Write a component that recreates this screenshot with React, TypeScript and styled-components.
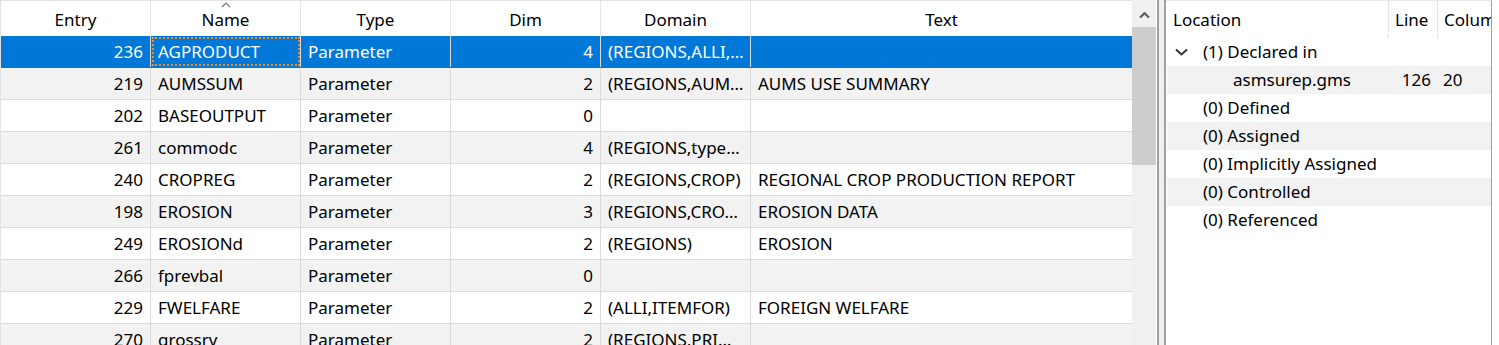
import styled, { createGlobalStyle } from "styled-components";

const GlobalStyle = createGlobalStyle`
  * { box-sizing: border-box; }
  html, body { margin: 0; padding: 0; background: #fff; }
  body {
    font-family: "Noto Sans", "Open Sans", sans-serif;
    font-size: 17px;
    color: #000;
  }
`;

type SymbolRow = {
  entry: number;
  name: string;
  type: string;
  dim: number;
  domain: string;
  text: string;
};

const rows: SymbolRow[] = [
  { entry: 236, name: "AGPRODUCT", type: "Parameter", dim: 4, domain: "(REGIONS,ALLI,…", text: "" },
  { entry: 219, name: "AUMSSUM", type: "Parameter", dim: 2, domain: "(REGIONS,AUM…", text: "AUMS USE SUMMARY" },
  { entry: 202, name: "BASEOUTPUT", type: "Parameter", dim: 0, domain: "", text: "" },
  { entry: 261, name: "commodc", type: "Parameter", dim: 4, domain: "(REGIONS,type…", text: "" },
  { entry: 240, name: "CROPREG", type: "Parameter", dim: 2, domain: "(REGIONS,CROP)", text: "REGIONAL CROP PRODUCTION REPORT" },
  { entry: 198, name: "EROSION", type: "Parameter", dim: 3, domain: "(REGIONS,CRO…", text: "EROSION DATA" },
  { entry: 249, name: "EROSIONd", type: "Parameter", dim: 2, domain: "(REGIONS)", text: "EROSION" },
  { entry: 266, name: "fprevbal", type: "Parameter", dim: 0, domain: "", text: "" },
  { entry: 229, name: "FWELFARE", type: "Parameter", dim: 2, domain: "(ALLI,ITEMFOR)", text: "FOREIGN WELFARE" },
  { entry: 270, name: "grossrv", type: "Parameter", dim: 2, domain: "(REGIONS,PRI…", text: "" },
];

const references = [
  { label: "(0) Defined" },
  { label: "(0) Assigned" },
  { label: "(0) Implicitly Assigned" },
  { label: "(0) Controlled" },
  { label: "(0) Referenced" },
];

const COLUMNS = "150px 150px 150px 150px 150px 1fr";

const ChevronUp = ({ size = 10, color = "#606060", width = 2 }: { size?: number; color?: string; width?: number }) => (
  <svg width={size} height={size * 0.6} viewBox="0 0 10 6">
    <polyline points="1,5 5,1 9,5" fill="none" stroke={color} strokeWidth={width} />
  </svg>
);

const ChevronDown = () => (
  <svg width="13" height="8" viewBox="0 0 13 8">
    <polyline points="1,1.5 6.5,6.5 12,1.5" fill="none" stroke="#333" strokeWidth="2" />
  </svg>
);

const App = () => {
  return (
    <>
      <GlobalStyle />
      <Window>
        <TablePane>
          <HeaderRow>
            <HeaderCell>Entry</HeaderCell>
            <HeaderCell>
              <SortMark>
                <ChevronUp size={10} color="#777" width={1.2} />
              </SortMark>
              Name
            </HeaderCell>
            <HeaderCell>Type</HeaderCell>
            <HeaderCell>Dim</HeaderCell>
            <HeaderCell>Domain</HeaderCell>
            <HeaderCell $last>Text</HeaderCell>
          </HeaderRow>
          {rows.map((r, i) => (
            <DataRow key={r.entry} $selected={i === 0} $alt={i % 2 === 1}>
              <Cell $right>{r.entry}</Cell>
              <Cell $focused={i === 0}>{r.name}</Cell>
              <Cell>{r.type}</Cell>
              <Cell $right>{r.dim}</Cell>
              <Cell>{r.domain}</Cell>
              <Cell $last>{r.text}</Cell>
            </DataRow>
          ))}
        </TablePane>

        <ScrollBar>
          <ScrollArrow>
            <ChevronUp size={11} color="#606060" width={2} />
          </ScrollArrow>
          <ScrollThumb />
        </ScrollBar>

        <Splitter />

        <RefPane>
          <RefHeader>
            <RefHeaderCell>Location</RefHeaderCell>
            <RefHeaderCell $sep>Line</RefHeaderCell>
            <RefHeaderCell $sep>Colum</RefHeaderCell>
          </RefHeader>
          <RefRow>
            <TreeLabel $level={0}>
              <Toggle>
                <ChevronDown />
              </Toggle>
              (1) Declared in
            </TreeLabel>
            <RefNum />
            <RefCol />
          </RefRow>
          <RefRow $alt>
            <TreeLabel $level={1}>asmsurep.gms</TreeLabel>
            <RefNum>126</RefNum>
            <RefCol>20</RefCol>
          </RefRow>
          {references.map((r, i) => (
            <RefRow key={r.label} $alt={i % 2 === 1}>
              <TreeLabel $level={0}>
                <Toggle />
                {r.label}
              </TreeLabel>
              <RefNum />
              <RefCol />
            </RefRow>
          ))}
        </RefPane>
      </Window>
    </>
  );
};

export default App;

const Window = styled.div`
  display: flex;
  width: 1499px;
  height: 345px;
  overflow: hidden;
  background: #fff;
`;

const TablePane = styled.div`
  width: 1132px;
  flex-shrink: 0;
  border-top: 1px solid #e3e3e3;
  border-left: 1px solid #e3e3e3;
`;

const HeaderRow = styled.div`
  display: grid;
  grid-template-columns: ${COLUMNS};
  height: 35px;
`;

const HeaderCell = styled.div<{ $last?: boolean }>`
  position: relative;
  display: flex;
  align-items: center;
  justify-content: center;
  padding-top: 2px;
  border-right: ${(p) => (p.$last ? "none" : "1px solid #e5e5e5")};
  white-space: nowrap;
`;

const SortMark = styled.span`
  position: absolute;
  top: 1px;
  left: 50%;
  transform: translateX(-50%);
  display: flex;
`;

const DataRow = styled.div<{ $selected?: boolean; $alt?: boolean }>`
  display: grid;
  grid-template-columns: ${COLUMNS};
  height: 32px;
  background: ${(p) => (p.$selected ? "#0078d7" : p.$alt ? "#f2f2f2" : "#fff")};
  color: ${(p) => (p.$selected ? "#fff" : "#000")};
  border-bottom: 1px solid ${(p) => (p.$selected ? "#0078d7" : "#dadada")};
`;

const Cell = styled.div<{ $right?: boolean; $focused?: boolean; $last?: boolean }>`
  display: flex;
  align-items: center;
  justify-content: ${(p) => (p.$right ? "flex-end" : "flex-start")};
  padding: 0 7px;
  white-space: nowrap;
  overflow: hidden;
  border-right: ${(p) => (p.$last ? "none" : "1px solid #dadada")};
  outline: ${(p) => (p.$focused ? "2px dotted #f98a1f" : "none")};
  outline-offset: -3px;
`;

const ScrollBar = styled.div`
  width: 24px;
  flex-shrink: 0;
  background: #f0f0f0;
  display: flex;
  flex-direction: column;
`;

const ScrollArrow = styled.div`
  height: 27px;
  display: flex;
  align-items: center;
  justify-content: center;
  padding-top: 4px;
`;

const ScrollThumb = styled.div`
  height: 138px;
  background: #cdcdcd;
`;

const Splitter = styled.div`
  width: 9px;
  flex-shrink: 0;
  background: #f0f0f0;
  border-left: 2px solid #a0a0a0;
  border-right: 2px solid #a0a0a0;
  margin-left: 1px;
`;

const RefPane = styled.div`
  width: 326px;
  flex-shrink: 0;
  border-right: 1px solid #a0a0a0;
  border-top: 1px solid #e8e8e8;
  padding-left: 1px;
`;

const REF_COLUMNS = "221px 49px 1fr";

const RefHeader = styled.div`
  display: grid;
  grid-template-columns: ${REF_COLUMNS};
  height: 37px;
`;

const RefHeaderCell = styled.div<{ $sep?: boolean }>`
  display: flex;
  align-items: center;
  padding: 0 0 1px 6px;
  white-space: nowrap;
  overflow: hidden;
  border-left: ${(p) => (p.$sep ? "1px dotted #cfcfcf" : "none")};
`;

const RefRow = styled.div<{ $alt?: boolean }>`
  display: grid;
  grid-template-columns: ${REF_COLUMNS};
  height: 28px;
  padding-bottom: 1px;
  background: ${(p) => (p.$alt ? "#f2f2f2" : "#fff")};
`;

const TreeLabel = styled.div<{ $level: number }>`
  display: flex;
  align-items: center;
  padding-left: ${(p) => 8 + p.$level * 58}px;
  white-space: nowrap;
`;

const Toggle = styled.span`
  width: 28px;
  display: flex;
  align-items: center;
  padding-top: 1px;
`;

const RefNum = styled.div`
  display: flex;
  align-items: center;
  justify-content: flex-end;
  padding-right: 6px;
`;

const RefCol = styled.div`
  display: flex;
  align-items: center;
  padding-left: 6px;
`;
